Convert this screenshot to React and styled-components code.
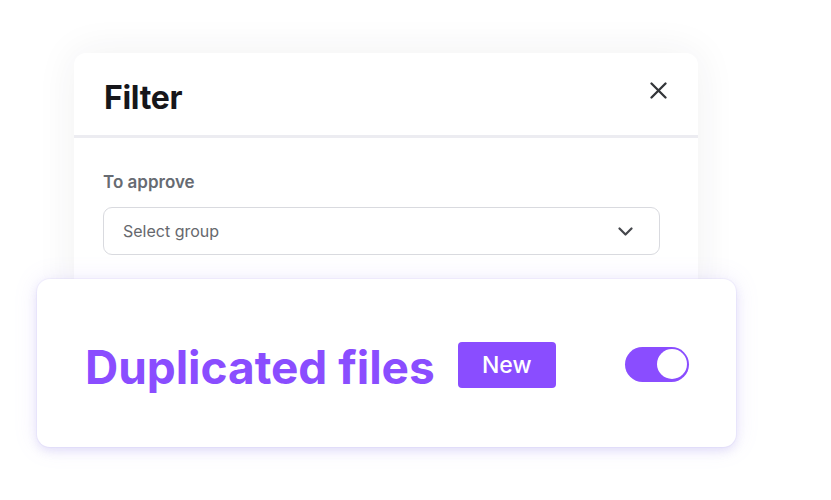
import React from "react";
import styled, { createGlobalStyle } from "styled-components";

const GlobalStyle = createGlobalStyle`
  html, body {
    margin: 0;
    padding: 0;
    background: #ffffff;
  }
  body {
    font-family: Inter, "Noto Sans", "Liberation Sans", sans-serif;
  }
`;

const Page = styled.div`
  width: 831px;
  height: 500px;
  overflow: hidden;
  display: flex;
  flex-direction: column;
  padding-top: 53px;
  box-sizing: border-box;
`;

const FilterCard = styled.div`
  width: 624px;
  height: 250px;
  margin-left: 74px;
  background: #fff;
  border-radius: 12px;
  box-shadow: 0 0 40px rgba(40, 40, 60, 0.07);
  display: flex;
  flex-direction: column;
`;

const Header = styled.div`
  height: 82px;
  display: flex;
  align-items: center;
  justify-content: space-between;
  padding: 0 28px 0 30px;
  border-bottom: 3px solid #ececf1;
`;

const Title = styled.h2`
  margin: 6px 0 0;
  font-size: 32px;
  font-weight: 700;
  color: #16161a;
  letter-spacing: -0.3px;
`;

const CloseButton = styled.button`
  border: none;
  background: none;
  padding: 0;
  width: 24px;
  height: 24px;
  display: flex;
  align-items: center;
  justify-content: center;
  margin-top: -7px;
  color: #333539;
`;

const Body = styled.div`
  padding: 34px 38px 0 29px;
  display: flex;
  flex-direction: column;
`;

const Label = styled.div`
  font-size: 17px;
  font-weight: 600;
  color: #676b72;
  margin-bottom: 15px;
`;

const Select = styled.div`
  height: 48px;
  box-sizing: border-box;
  border: 1.5px solid #d9dadf;
  border-radius: 9px;
  display: flex;
  align-items: center;
  justify-content: space-between;
  padding: 0 26px 0 19px;
`;

const Placeholder = styled.span`
  font-size: 16px;
  color: #66686d;
`;

const FeatureCard = styled.div`
  width: 699px;
  height: 168px;
  margin-left: 37px;
  margin-top: -24px;
  position: relative;
  background: #fff;
  border-radius: 13px;
  box-shadow: 0 0 0 1px rgba(140, 120, 230, 0.06),
    0 4px 10px rgba(120, 100, 220, 0.16),
    0 0 24px rgba(150, 130, 240, 0.14);
  display: flex;
  align-items: center;
  padding: 0 47px 0 48px;
  box-sizing: border-box;
`;

const FeatureName = styled.span`
  font-size: 46px;
  font-weight: 700;
  color: #8a4dff;
  letter-spacing: -0.05px;
  margin-top: 8px;
`;

const Badge = styled.span`
  margin-left: 23px;
  width: 98px;
  height: 46px;
  border-radius: 4px;
  background: #8a4dff;
  color: #fff;
  font-size: 23px;
  font-weight: 500;
  display: flex;
  align-items: center;
  justify-content: center;
  margin-top: 4px;
`;

const Toggle = styled.div`
  margin-left: auto;
  width: 64px;
  height: 35px;
  border-radius: 18px;
  background: ${(p) => (p.$on ? "#8a4dff" : "#d0d0d8")};
  display: flex;
  align-items: center;
  justify-content: ${(p) => (p.$on ? "flex-end" : "flex-start")};
  padding: 0 2px;
  box-sizing: border-box;
  margin-top: 2px;
`;

const Knob = styled.span`
  width: 30px;
  height: 30px;
  border-radius: 50%;
  background: #fff;
`;

export default function App() {
  return (
    <Page>
      <GlobalStyle />
      <FilterCard>
        <Header>
          <Title>Filter</Title>
          <CloseButton aria-label="Close">
            <svg width="17" height="17" viewBox="0 0 17 17" fill="none">
              <path
                d="M1.5 1.5l14 14M15.5 1.5l-14 14"
                stroke="currentColor"
                strokeWidth="2.3"
                strokeLinecap="round"
              />
            </svg>
          </CloseButton>
        </Header>
        <Body>
          <Label>To approve</Label>
          <Select>
            <Placeholder>Select group</Placeholder>
            <svg width="15" height="9" viewBox="0 0 15 9" fill="none">
              <path
                d="M1.5 1.5l6 6 6-6"
                stroke="#45474c"
                strokeWidth="2.2"
                strokeLinecap="round"
                strokeLinejoin="round"
              />
            </svg>
          </Select>
        </Body>
      </FilterCard>
      <FeatureCard>
        <FeatureName>Duplicated files</FeatureName>
        <Badge>New</Badge>
        <Toggle $on>
          <Knob />
        </Toggle>
      </FeatureCard>
    </Page>
  );
}
